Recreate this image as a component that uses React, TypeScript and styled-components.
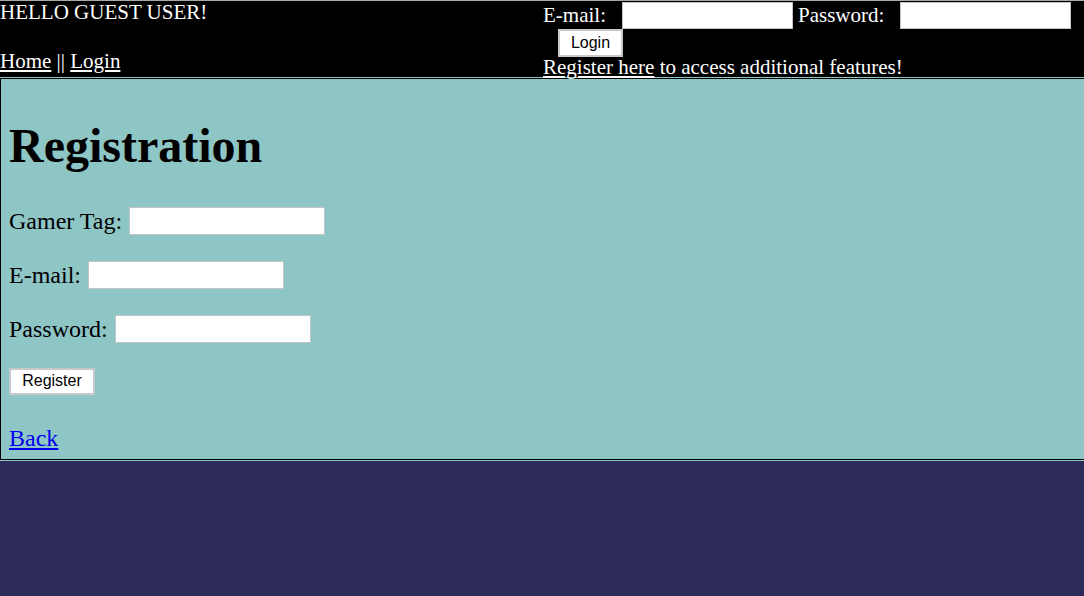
import React from "react";
import styled, { createGlobalStyle } from "styled-components";

const Global = createGlobalStyle`
  html, body {
    margin: 0;
    padding: 0;
    background: #2d2b5a;
    overflow: hidden;
  }
  body {
    font-family: "Liberation Serif", "Times New Roman", serif;
  }
`;

const Page = styled.div`
  width: 1084px;
  height: 596px;
  background: #2d2b5a;
`;

const Header = styled.header`
  display: grid;
  grid-template-columns: 542px 1fr;
  height: 76px;
  background: #000;
  border-top: 1px solid #a8a8a8;
  color: #fff;
  font-size: 21px;
  line-height: 23px;
`;

const LeftCol = styled.div`
  display: flex;
  flex-direction: column;
`;

const Greeting = styled.div`
  height: 23px;
`;

const Nav = styled.nav`
  margin-top: 26px;
  height: 23px;
`;

const WhiteLink = styled.a`
  color: #fff;
  text-decoration: underline;
`;

const RightCol = styled.div`
  display: flex;
  flex-direction: column;
  padding-left: 1px;
`;

const LoginRow = styled.div`
  display: flex;
  align-items: center;
  height: 28px;
  white-space: nowrap;
`;

const HeadLabel = styled.span<{ $gap: number; $lead?: number }>`
  margin-left: ${(p) => p.$lead ?? 0}px;
  margin-right: ${(p) => p.$gap}px;
`;

const HeadInput = styled.input`
  box-sizing: border-box;
  width: 171px;
  height: 27px;
  margin: 0;
  border: 1px solid #c4c4c4;
  background: #fff;
  padding: 0 4px;
`;

const Button = styled.button<{ $w: number; $h: number }>`
  box-sizing: border-box;
  width: ${(p) => p.$w}px;
  height: ${(p) => p.$h}px;
  margin: 0;
  padding: 0;
  background: #fff;
  border: 2px solid #c8c8c8;
  color: #000;
  font-family: "Liberation Sans", Arial, sans-serif;
  font-size: 16px;
`;

const ButtonRow = styled.div`
  height: 28px;
  padding-left: 15px;
`;

const RegisterLine = styled.div`
  height: 21px;
  line-height: 21px;
  white-space: nowrap;
`;

const Main = styled.main`
  margin-top: 1px;
  background: #8ec5c5;
  border: 1px solid #000;
  border-right: none;
  box-shadow: 0 0 0 1px #8ec5c5;
  padding: 8px 8px 7px 8px;
  display: flex;
  flex-direction: column;
  align-items: flex-start;
  color: #000;
`;

const Title = styled.h1`
  margin: 32px 0;
  font-size: 48px;
  line-height: 54px;
  font-weight: bold;
`;

const Field = styled.div`
  display: flex;
  align-items: flex-end;
  height: 30px;
  margin-bottom: 24px;
  font-size: 24px;
  line-height: 27px;
`;

const FieldInput = styled.input`
  box-sizing: border-box;
  width: 196px;
  height: 28px;
  margin: 0 0 0 7px;
  border: 1px solid #c4c4c4;
  background: #fff;
  padding: 0 4px;
`;

const SubmitRow = styled.div`
  display: flex;
  align-items: center;
  height: 30px;
  margin-top: -1px;
`;

const BackLink = styled.a`
  margin-top: 29px;
  font-size: 24px;
  line-height: 27px;
  color: #0000ee;
  text-decoration: underline;
`;

export default function App() {
  return (
    <Page>
      <Global />
      <Header>
        <LeftCol>
          <Greeting>HELLO GUEST USER!</Greeting>
          <Nav>
            <WhiteLink href="#">Home</WhiteLink> || <WhiteLink href="#">Login</WhiteLink>
          </Nav>
        </LeftCol>
        <RightCol>
          <LoginRow>
            <HeadLabel $gap={16}>E-mail:</HeadLabel>
            <HeadInput type="text" />
            <HeadLabel $lead={5} $gap={16}>Password:</HeadLabel>
            <HeadInput type="password" />
          </LoginRow>
          <ButtonRow>
            <Button $w={65} $h={28}>Login</Button>
          </ButtonRow>
          <RegisterLine>
            <WhiteLink href="#">Register here</WhiteLink> to access additional features!
          </RegisterLine>
        </RightCol>
      </Header>
      <Main>
        <Title>Registration</Title>
        <Field>
          Gamer Tag:
          <FieldInput type="text" />
        </Field>
        <Field>
          E-mail:
          <FieldInput type="text" />
        </Field>
        <Field>
          Password:
          <FieldInput type="password" />
        </Field>
        <SubmitRow>
          <Button $w={86} $h={27}>Register</Button>
        </SubmitRow>
        <BackLink href="#">Back</BackLink>
      </Main>
    </Page>
  );
}
